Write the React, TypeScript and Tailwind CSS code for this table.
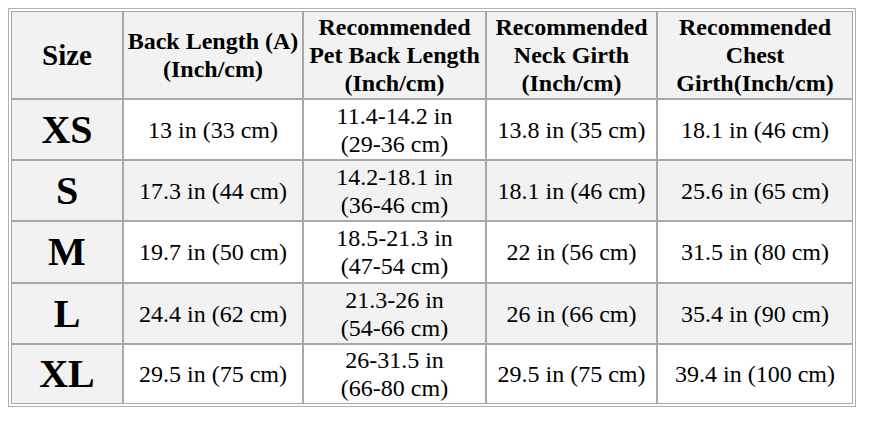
import React from "react";

const rows = [
  { size: "XS", back: "13 in (33 cm)", pet: ["11.4-14.2 in", "(29-36 cm)"], neck: "13.8 in (35 cm)", chest: "18.1 in (46 cm)", h: "h-[61px]", gray: false },
  { size: "S", back: "17.3 in (44 cm)", pet: ["14.2-18.1 in", "(36-46 cm)"], neck: "18.1 in (46 cm)", chest: "25.6 in (65 cm)", h: "h-[61px]", gray: true },
  { size: "M", back: "19.7 in (50 cm)", pet: ["18.5-21.3 in", "(47-54 cm)"], neck: "22 in (56 cm)", chest: "31.5 in (80 cm)", h: "h-[62px]", gray: false },
  { size: "L", back: "24.4 in (62 cm)", pet: ["21.3-26 in", "(54-66 cm)"], neck: "26 in (66 cm)", chest: "35.4 in (90 cm)", h: "h-[61px]", gray: true },
  { size: "XL", back: "29.5 in (75 cm)", pet: ["26-31.5 in", "(66-80 cm)"], neck: "29.5 in (75 cm)", chest: "39.4 in (100 cm)", h: "h-[60px]", gray: false },
];

const cell = "border border-[#a8a8a8] text-center align-middle p-0";

export default function App() {
  return (
    <div className="w-[870px] h-[421px] bg-white pt-[8px] pl-[8px] font-['Liberation_Serif',serif] text-black">
      <div className="inline-block border border-[#b0b0b0] p-[2px]">
        <table className="table-fixed border-separate border-spacing-0 w-[842px]">
          <thead>
            <tr className="h-[88px] bg-[#f2f2f2] text-[24px] leading-[28px] font-bold">
              <th className={`${cell} w-[112px] text-[29px]`}>Size</th>
              <th className={`${cell} w-[180px]`}>
                Back Length (A)
                <br />
                (Inch/cm)
              </th>
              <th className={`${cell} w-[183px]`}>
                Recommended
                <br />
                Pet Back Length
                <br />
                (Inch/cm)
              </th>
              <th className={`${cell} w-[171px]`}>
                Recommended
                <br />
                Neck Girth
                <br />
                (Inch/cm)
              </th>
              <th className={`${cell} w-[196px]`}>
                Recommended
                <br />
                Chest
                <br />
                Girth(Inch/cm)
              </th>
            </tr>
          </thead>
          <tbody>
            {rows.map((r) => (
              <tr key={r.size} className={`${r.h} text-[24px] leading-[28px] ${r.gray ? "bg-[#f2f2f2]" : "bg-white"}`}>
                <th className={`${cell} bg-[#f2f2f2] text-[40px] leading-[44px] font-bold`}>{r.size}</th>
                <td className={cell}>{r.back}</td>
                <td className={cell}>
                  {r.pet[0]}
                  <br />
                  {r.pet[1]}
                </td>
                <td className={cell}>{r.neck}</td>
                <td className={cell}>{r.chest}</td>
              </tr>
            ))}
          </tbody>
        </table>
      </div>
    </div>
  );
}
